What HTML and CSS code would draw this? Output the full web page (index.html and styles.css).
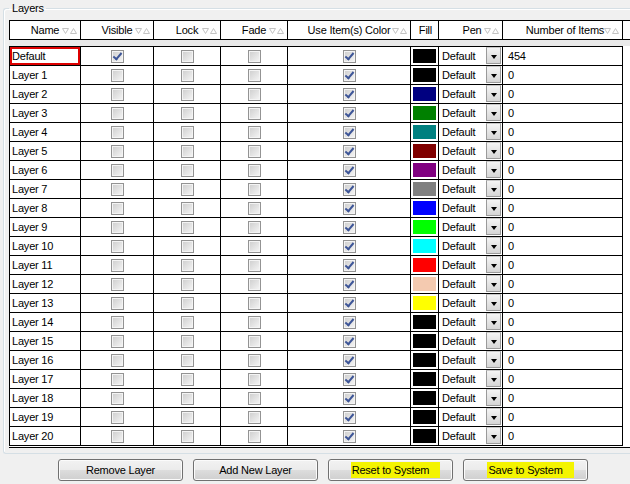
FILE: index.html
```html
<!DOCTYPE html>
<html lang="en">
<head>
    <meta charset="UTF-8">
    <title>Layers</title>
    <link rel="stylesheet" href="styles.css">
</head>
<body>

    <fieldset class="layers">
        <legend>Layers</legend>

        <div class="grid-head">
            <div class="hcell w-name">Name<svg class="sort" width="15" height="6"><polygon points="0.5,0.5 6.5,0.5 3.5,5.5"/><polygon points="8.5,5.5 14.5,5.5 11.5,0.5"/></svg></div>
            <div class="hcell w-vis">Visible<svg class="sort" width="15" height="6"><polygon points="0.5,0.5 6.5,0.5 3.5,5.5"/><polygon points="8.5,5.5 14.5,5.5 11.5,0.5"/></svg></div>
            <div class="hcell w-lock">Lock<svg class="sort" width="15" height="6"><polygon points="0.5,0.5 6.5,0.5 3.5,5.5"/><polygon points="8.5,5.5 14.5,5.5 11.5,0.5"/></svg></div>
            <div class="hcell w-fade">Fade<svg class="sort" width="15" height="6"><polygon points="0.5,0.5 6.5,0.5 3.5,5.5"/><polygon points="8.5,5.5 14.5,5.5 11.5,0.5"/></svg></div>
            <div class="hcell w-use">Use Item(s) Color<svg class="sort" width="15" height="6"><polygon points="0.5,0.5 6.5,0.5 3.5,5.5"/><polygon points="8.5,5.5 14.5,5.5 11.5,0.5"/></svg></div>
            <div class="hcell w-fill">Fill</div>
            <div class="hcell w-pen">Pen<svg class="sort" width="15" height="6"><polygon points="0.5,0.5 6.5,0.5 3.5,5.5"/><polygon points="8.5,5.5 14.5,5.5 11.5,0.5"/></svg></div>
            <div class="hcell w-num">Number of Items<svg class="sort" width="15" height="6"><polygon points="0.5,0.5 6.5,0.5 3.5,5.5"/><polygon points="8.5,5.5 14.5,5.5 11.5,0.5"/></svg></div>
            <div class="hcell filler"></div>
        </div>

        <div class="band"></div>

        <div class="grid-body">
            <div class="rows">
                <div class="row">
                    <div class="cell w-name txt sel">Default</div>
                    <div class="cell w-vis box"><span class="cb on"></span></div>
                    <div class="cell w-lock box"><span class="cb"></span></div>
                    <div class="cell w-fade box"><span class="cb"></span></div>
                    <div class="cell w-use box"><span class="cb on"></span></div>
                    <div class="cell w-fill"><span class="swatch" style="background:#000000"></span></div>
                    <div class="cell w-pen">Default<span class="drop"></span></div>
                    <div class="cell w-num">454</div>
                </div>
                <div class="row">
                    <div class="cell w-name txt">Layer 1</div>
                    <div class="cell w-vis box"><span class="cb"></span></div>
                    <div class="cell w-lock box"><span class="cb"></span></div>
                    <div class="cell w-fade box"><span class="cb"></span></div>
                    <div class="cell w-use box"><span class="cb on"></span></div>
                    <div class="cell w-fill"><span class="swatch" style="background:#000000"></span></div>
                    <div class="cell w-pen">Default<span class="drop"></span></div>
                    <div class="cell w-num">0</div>
                </div>
                <div class="row">
                    <div class="cell w-name txt">Layer 2</div>
                    <div class="cell w-vis box"><span class="cb"></span></div>
                    <div class="cell w-lock box"><span class="cb"></span></div>
                    <div class="cell w-fade box"><span class="cb"></span></div>
                    <div class="cell w-use box"><span class="cb on"></span></div>
                    <div class="cell w-fill"><span class="swatch" style="background:#000080"></span></div>
                    <div class="cell w-pen">Default<span class="drop"></span></div>
                    <div class="cell w-num">0</div>
                </div>
                <div class="row">
                    <div class="cell w-name txt">Layer 3</div>
                    <div class="cell w-vis box"><span class="cb"></span></div>
                    <div class="cell w-lock box"><span class="cb"></span></div>
                    <div class="cell w-fade box"><span class="cb"></span></div>
                    <div class="cell w-use box"><span class="cb on"></span></div>
                    <div class="cell w-fill"><span class="swatch" style="background:#008000"></span></div>
                    <div class="cell w-pen">Default<span class="drop"></span></div>
                    <div class="cell w-num">0</div>
                </div>
                <div class="row">
                    <div class="cell w-name txt">Layer 4</div>
                    <div class="cell w-vis box"><span class="cb"></span></div>
                    <div class="cell w-lock box"><span class="cb"></span></div>
                    <div class="cell w-fade box"><span class="cb"></span></div>
                    <div class="cell w-use box"><span class="cb on"></span></div>
                    <div class="cell w-fill"><span class="swatch" style="background:#008080"></span></div>
                    <div class="cell w-pen">Default<span class="drop"></span></div>
                    <div class="cell w-num">0</div>
                </div>
                <div class="row">
                    <div class="cell w-name txt">Layer 5</div>
                    <div class="cell w-vis box"><span class="cb"></span></div>
                    <div class="cell w-lock box"><span class="cb"></span></div>
                    <div class="cell w-fade box"><span class="cb"></span></div>
                    <div class="cell w-use box"><span class="cb on"></span></div>
                    <div class="cell w-fill"><span class="swatch" style="background:#800000"></span></div>
                    <div class="cell w-pen">Default<span class="drop"></span></div>
                    <div class="cell w-num">0</div>
                </div>
                <div class="row">
                    <div class="cell w-name txt">Layer 6</div>
                    <div class="cell w-vis box"><span class="cb"></span></div>
                    <div class="cell w-lock box"><span class="cb"></span></div>
                    <div class="cell w-fade box"><span class="cb"></span></div>
                    <div class="cell w-use box"><span class="cb on"></span></div>
                    <div class="cell w-fill"><span class="swatch" style="background:#800080"></span></div>
                    <div class="cell w-pen">Default<span class="drop"></span></div>
                    <div class="cell w-num">0</div>
                </div>
                <div class="row">
                    <div class="cell w-name txt">Layer 7</div>
                    <div class="cell w-vis box"><span class="cb"></span></div>
                    <div class="cell w-lock box"><span class="cb"></span></div>
                    <div class="cell w-fade box"><span class="cb"></span></div>
                    <div class="cell w-use box"><span class="cb on"></span></div>
                    <div class="cell w-fill"><span class="swatch" style="background:#808080"></span></div>
                    <div class="cell w-pen">Default<span class="drop"></span></div>
                    <div class="cell w-num">0</div>
                </div>
                <div class="row">
                    <div class="cell w-name txt">Layer 8</div>
                    <div class="cell w-vis box"><span class="cb"></span></div>
                    <div class="cell w-lock box"><span class="cb"></span></div>
                    <div class="cell w-fade box"><span class="cb"></span></div>
                    <div class="cell w-use box"><span class="cb on"></span></div>
                    <div class="cell w-fill"><span class="swatch" style="background:#0000ff"></span></div>
                    <div class="cell w-pen">Default<span class="drop"></span></div>
                    <div class="cell w-num">0</div>
                </div>
                <div class="row">
                    <div class="cell w-name txt">Layer 9</div>
                    <div class="cell w-vis box"><span class="cb"></span></div>
                    <div class="cell w-lock box"><span class="cb"></span></div>
                    <div class="cell w-fade box"><span class="cb"></span></div>
                    <div class="cell w-use box"><span class="cb on"></span></div>
                    <div class="cell w-fill"><span class="swatch" style="background:#00ff00"></span></div>
                    <div class="cell w-pen">Default<span class="drop"></span></div>
                    <div class="cell w-num">0</div>
                </div>
                <div class="row">
                    <div class="cell w-name txt">Layer 10</div>
                    <div class="cell w-vis box"><span class="cb"></span></div>
                    <div class="cell w-lock box"><span class="cb"></span></div>
                    <div class="cell w-fade box"><span class="cb"></span></div>
                    <div class="cell w-use box"><span class="cb on"></span></div>
                    <div class="cell w-fill"><span class="swatch" style="background:#00ffff"></span></div>
                    <div class="cell w-pen">Default<span class="drop"></span></div>
                    <div class="cell w-num">0</div>
                </div>
                <div class="row">
                    <div class="cell w-name txt">Layer 11</div>
                    <div class="cell w-vis box"><span class="cb"></span></div>
                    <div class="cell w-lock box"><span class="cb"></span></div>
                    <div class="cell w-fade box"><span class="cb"></span></div>
                    <div class="cell w-use box"><span class="cb on"></span></div>
                    <div class="cell w-fill"><span class="swatch" style="background:#ff0000"></span></div>
                    <div class="cell w-pen">Default<span class="drop"></span></div>
                    <div class="cell w-num">0</div>
                </div>
                <div class="row">
                    <div class="cell w-name txt">Layer 12</div>
                    <div class="cell w-vis box"><span class="cb"></span></div>
                    <div class="cell w-lock box"><span class="cb"></span></div>
                    <div class="cell w-fade box"><span class="cb"></span></div>
                    <div class="cell w-use box"><span class="cb on"></span></div>
                    <div class="cell w-fill"><span class="swatch" style="background:#f4cab0"></span></div>
                    <div class="cell w-pen">Default<span class="drop"></span></div>
                    <div class="cell w-num">0</div>
                </div>
                <div class="row">
                    <div class="cell w-name txt">Layer 13</div>
                    <div class="cell w-vis box"><span class="cb"></span></div>
                    <div class="cell w-lock box"><span class="cb"></span></div>
                    <div class="cell w-fade box"><span class="cb"></span></div>
                    <div class="cell w-use box"><span class="cb on"></span></div>
                    <div class="cell w-fill"><span class="swatch" style="background:#ffff00"></span></div>
                    <div class="cell w-pen">Default<span class="drop"></span></div>
                    <div class="cell w-num">0</div>
                </div>
                <div class="row">
                    <div class="cell w-name txt">Layer 14</div>
                    <div class="cell w-vis box"><span class="cb"></span></div>
                    <div class="cell w-lock box"><span class="cb"></span></div>
                    <div class="cell w-fade box"><span class="cb"></span></div>
                    <div class="cell w-use box"><span class="cb on"></span></div>
                    <div class="cell w-fill"><span class="swatch" style="background:#000000"></span></div>
                    <div class="cell w-pen">Default<span class="drop"></span></div>
                    <div class="cell w-num">0</div>
                </div>
                <div class="row">
                    <div class="cell w-name txt">Layer 15</div>
                    <div class="cell w-vis box"><span class="cb"></span></div>
                    <div class="cell w-lock box"><span class="cb"></span></div>
                    <div class="cell w-fade box"><span class="cb"></span></div>
                    <div class="cell w-use box"><span class="cb on"></span></div>
                    <div class="cell w-fill"><span class="swatch" style="background:#000000"></span></div>
                    <div class="cell w-pen">Default<span class="drop"></span></div>
                    <div class="cell w-num">0</div>
                </div>
                <div class="row">
                    <div class="cell w-name txt">Layer 16</div>
                    <div class="cell w-vis box"><span class="cb"></span></div>
                    <div class="cell w-lock box"><span class="cb"></span></div>
                    <div class="cell w-fade box"><span class="cb"></span></div>
                    <div class="cell w-use box"><span class="cb on"></span></div>
                    <div class="cell w-fill"><span class="swatch" style="background:#000000"></span></div>
                    <div class="cell w-pen">Default<span class="drop"></span></div>
                    <div class="cell w-num">0</div>
                </div>
                <div class="row">
                    <div class="cell w-name txt">Layer 17</div>
                    <div class="cell w-vis box"><span class="cb"></span></div>
                    <div class="cell w-lock box"><span class="cb"></span></div>
                    <div class="cell w-fade box"><span class="cb"></span></div>
                    <div class="cell w-use box"><span class="cb on"></span></div>
                    <div class="cell w-fill"><span class="swatch" style="background:#000000"></span></div>
                    <div class="cell w-pen">Default<span class="drop"></span></div>
                    <div class="cell w-num">0</div>
                </div>
                <div class="row">
                    <div class="cell w-name txt">Layer 18</div>
                    <div class="cell w-vis box"><span class="cb"></span></div>
                    <div class="cell w-lock box"><span class="cb"></span></div>
                    <div class="cell w-fade box"><span class="cb"></span></div>
                    <div class="cell w-use box"><span class="cb on"></span></div>
                    <div class="cell w-fill"><span class="swatch" style="background:#000000"></span></div>
                    <div class="cell w-pen">Default<span class="drop"></span></div>
                    <div class="cell w-num">0</div>
                </div>
                <div class="row">
                    <div class="cell w-name txt">Layer 19</div>
                    <div class="cell w-vis box"><span class="cb"></span></div>
                    <div class="cell w-lock box"><span class="cb"></span></div>
                    <div class="cell w-fade box"><span class="cb"></span></div>
                    <div class="cell w-use box"><span class="cb on"></span></div>
                    <div class="cell w-fill"><span class="swatch" style="background:#000000"></span></div>
                    <div class="cell w-pen">Default<span class="drop"></span></div>
                    <div class="cell w-num">0</div>
                </div>
                <div class="row">
                    <div class="cell w-name txt">Layer 20</div>
                    <div class="cell w-vis box"><span class="cb"></span></div>
                    <div class="cell w-lock box"><span class="cb"></span></div>
                    <div class="cell w-fade box"><span class="cb"></span></div>
                    <div class="cell w-use box"><span class="cb on"></span></div>
                    <div class="cell w-fill"><span class="swatch" style="background:#000000"></span></div>
                    <div class="cell w-pen">Default<span class="drop"></span></div>
                    <div class="cell w-num">0</div>
                </div>
            </div>
        </div>
    </fieldset>

    <div class="actions">
        <button class="btn">Remove Layer</button>
        <button class="btn">Add New Layer</button>
        <button class="btn"><span class="mark">Reset to System</span></button>
        <button class="btn"><span class="mark">Save to System</span></button>
    </div>

</body>
</html>
```

FILE: styles.css
```css
html, body {
    margin: 0;
}
body {
    width: 630px;
    height: 484px;
    overflow: hidden;
    padding-top: 2px;
    box-sizing: border-box;
    background-color: #f0f0f0;
    font-family: "Liberation Sans", Arial, sans-serif;
    font-size: 11px;
    letter-spacing: -0.2px;
    color: #000;
}
/* the group box runs on past the right edge of the window */
.layers {
    width: 621px;
    margin: 0 0 0 3px;
    padding: 5px 0 5px 5px;
    border: 1px solid #d5dfe5;
    border-right: none;
    border-radius: 3px 0 0 3px;
    box-shadow: inset 1px 1px 0 #fff;
}
.layers legend {
    padding: 0 2px 0 3px;
    line-height: 13px;
}

/* header */
.grid-head {
    display: flex;
    height: 20px;
    box-sizing: border-box;
    border-top: 1px solid #000;
    border-bottom: 1px solid #000;
    background-color: #fff;
}
.hcell {
    position: relative;
    flex-shrink: 0;
    box-sizing: border-box;
    border-right: 1px solid #000;
    text-align: center;
    line-height: 18px;
    white-space: nowrap;
}
.hcell:first-child {
    border-left: 1px solid #000;
}
.hcell.filler {
    flex: 1;
    border-right: none;
}
.sort {
    position: absolute;
    right: 3px;
    top: 7px;
    fill: none;
    stroke: #c4c4c4;
    stroke-width: 1;
}
.band {
    height: 6px;
    background-color: #e9e9e9;
}

/* column widths */
.w-name { width: 72px; }
.w-vis  { width: 73px; }
.w-lock { width: 67px; }
.w-fade { width: 67px; }
.w-use  { width: 123px; }
.w-fill { width: 28px; }
.w-pen  { width: 64px; }
.w-num  { width: 120px; }

/* rows */
.grid-body {
    background-color: #fff;
    border-bottom: 1px solid #000;
    padding-bottom: 1px;
}
.rows {
    width: 614px;
    border-top: 1px solid #000;
}
.row {
    display: flex;
    height: 19px;
    box-sizing: border-box;
    border-bottom: 1px solid #000;
}
.cell {
    display: flex;
    align-items: center;
    flex-shrink: 0;
    box-sizing: border-box;
    border-right: 1px solid #000;
    white-space: nowrap;
}
.cell:first-child {
    border-left: 1px solid #000;
}
.cell.txt {
    padding-left: 2px;
}
.cell.sel {
    box-shadow: inset 0 0 0 2px #dd0000;
}
.cell.box {
    justify-content: center;
}
.w-fill {
    padding-left: 2px;
}
.w-pen {
    padding-left: 3px;
}
.w-num {
    padding-left: 5px;
}

.cb {
    position: relative;
    width: 13px;
    height: 13px;
    box-sizing: border-box;
    border: 1px solid #939393;
    background: linear-gradient(135deg, #cdcdcd, #f6f6f6);
    box-shadow: inset 0 0 0 1px #f4f4f4;
}
.cb.on::after {
    content: "";
    position: absolute;
    left: 3px;
    top: 0;
    width: 3px;
    height: 7px;
    border: solid #3d5597;
    border-width: 0 2px 2px 0;
    transform: rotate(40deg);
}

.swatch {
    width: 23px;
    height: 14px;
}

.drop {
    display: flex;
    align-items: center;
    justify-content: center;
    align-self: stretch;
    width: 15px;
    margin: 0 1px 1px auto;
    box-sizing: border-box;
    border: 1px solid #9a9a9a;
    border-top-color: #c8c8c8;
    background: linear-gradient(#f4f4f4, #d6d6d6);
}
.drop::after {
    content: "";
    margin-top: 3px;
    border-left: 3px solid transparent;
    border-right: 3px solid transparent;
    border-top: 4px solid #000;
}

/* buttons */
.actions {
    display: flex;
    gap: 10px;
    margin: 5px 0 0 58px;
}
.btn {
    width: 125px;
    height: 22px;
    padding: 0;
    border: 1px solid #707070;
    border-radius: 3px;
    background: linear-gradient(#f2f2f2 0%, #ebebeb 50%, #dddddd 50%, #cfcfcf 100%);
    box-shadow: inset 0 0 0 1px #fbfbfb;
    font-family: inherit;
    font-size: 11px;
    letter-spacing: -0.2px;
    color: #000;
}
.mark {
    padding: 2px 11px 2px 1px;
    margin: 0 -11px 0 -1px;
    background-color: #f4f400;
}
```
